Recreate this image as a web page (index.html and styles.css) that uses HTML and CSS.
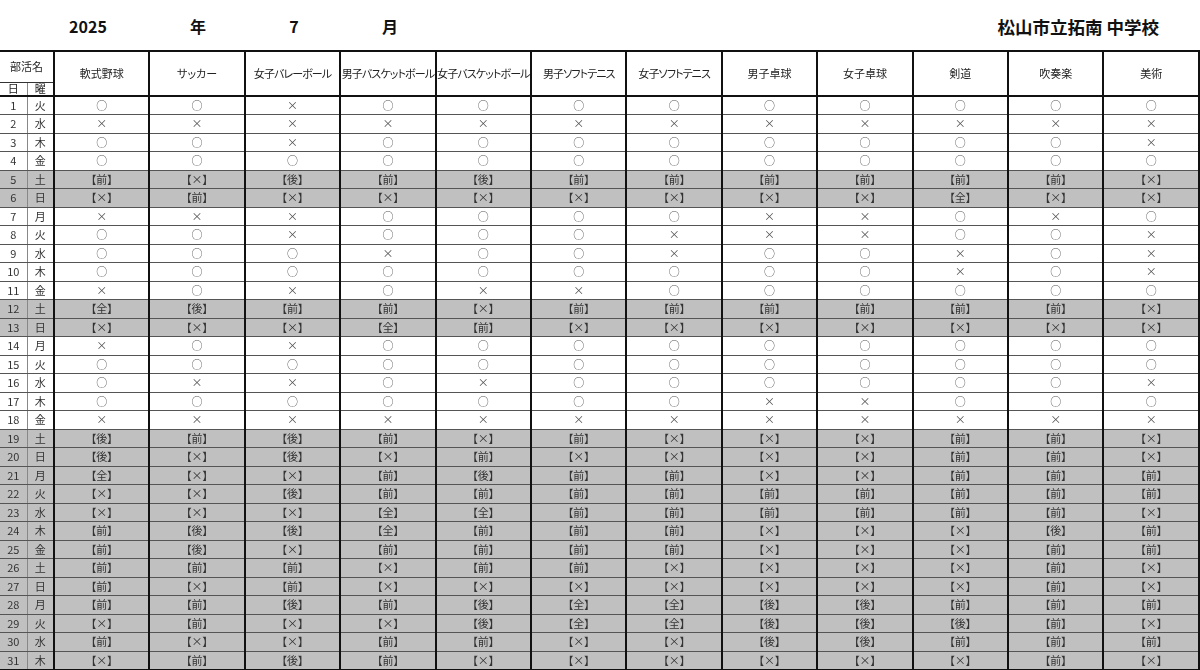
FILE: index.html
```html
<!DOCTYPE html>
<html lang="ja">
<head>
<meta charset="utf-8">
<title>部活動予定表</title>
<link rel="stylesheet" href="styles.css">
</head>
<body>
<div class="title">
  <span class="t-cell t-year">2025</span>
  <span class="t-cell t-nen">年</span>
  <span class="t-cell">7</span>
  <span class="t-cell">月</span>
  <span class="school">松山市立拓南 中学校</span>
</div>
<table class="sched">
  <colgroup>
    <col class="c-day"><col class="c-wd">
    <col><col><col><col><col><col><col><col><col><col><col><col>
  </colgroup>
  <thead>
    <tr class="h1">
      <th colspan="2" class="bukatsu">部活名</th>
      <th rowspan="2">軟式野球</th>
      <th rowspan="2">サッカー</th>
      <th rowspan="2" class="long">女子バレーボール</th>
      <th rowspan="2" class="long">男子バスケットボール</th>
      <th rowspan="2" class="long">女子バスケットボール</th>
      <th rowspan="2" class="long">男子ソフトテニス</th>
      <th rowspan="2" class="long">女子ソフトテニス</th>
      <th rowspan="2">男子卓球</th>
      <th rowspan="2">女子卓球</th>
      <th rowspan="2">剣道</th>
      <th rowspan="2">吹奏楽</th>
      <th rowspan="2" class="last">美術</th>
    </tr>
    <tr class="h2">
      <th class="day">日</th>
      <th class="wd">曜</th>
    </tr>
  </thead>
  <tbody>
    <tr><td class="day">1</td><td class="wd">火</td><td>○</td><td>○</td><td>×</td><td>○</td><td>○</td><td>○</td><td>○</td><td>○</td><td>○</td><td>○</td><td>○</td><td class="last">○</td></tr>
    <tr><td class="day">2</td><td class="wd">水</td><td>×</td><td>×</td><td>×</td><td>×</td><td>×</td><td>×</td><td>×</td><td>×</td><td>×</td><td>×</td><td>×</td><td class="last">×</td></tr>
    <tr><td class="day">3</td><td class="wd">木</td><td>○</td><td>○</td><td>×</td><td>○</td><td>○</td><td>○</td><td>○</td><td>○</td><td>○</td><td>○</td><td>○</td><td class="last">×</td></tr>
    <tr><td class="day">4</td><td class="wd">金</td><td>○</td><td>○</td><td>○</td><td>○</td><td>○</td><td>○</td><td>○</td><td>○</td><td>○</td><td>○</td><td>○</td><td class="last">○</td></tr>
    <tr class="we"><td class="day">5</td><td class="wd">土</td><td>【前】</td><td>【×】</td><td>【後】</td><td>【前】</td><td>【後】</td><td>【前】</td><td>【前】</td><td>【前】</td><td>【前】</td><td>【前】</td><td>【前】</td><td class="last">【×】</td></tr>
    <tr class="we"><td class="day">6</td><td class="wd">日</td><td>【×】</td><td>【前】</td><td>【×】</td><td>【×】</td><td>【×】</td><td>【×】</td><td>【×】</td><td>【×】</td><td>【×】</td><td>【全】</td><td>【×】</td><td class="last">【×】</td></tr>
    <tr><td class="day">7</td><td class="wd">月</td><td>×</td><td>×</td><td>×</td><td>○</td><td>○</td><td>○</td><td>○</td><td>×</td><td>×</td><td>○</td><td>×</td><td class="last">○</td></tr>
    <tr><td class="day">8</td><td class="wd">火</td><td>○</td><td>○</td><td>×</td><td>○</td><td>○</td><td>○</td><td>×</td><td>×</td><td>×</td><td>○</td><td>○</td><td class="last">×</td></tr>
    <tr><td class="day">9</td><td class="wd">水</td><td>○</td><td>○</td><td>○</td><td>×</td><td>○</td><td>○</td><td>×</td><td>○</td><td>○</td><td>×</td><td>○</td><td class="last">×</td></tr>
    <tr><td class="day">10</td><td class="wd">木</td><td>○</td><td>○</td><td>○</td><td>○</td><td>○</td><td>○</td><td>○</td><td>○</td><td>○</td><td>×</td><td>○</td><td class="last">×</td></tr>
    <tr><td class="day">11</td><td class="wd">金</td><td>×</td><td>○</td><td>×</td><td>○</td><td>×</td><td>×</td><td>○</td><td>○</td><td>○</td><td>○</td><td>○</td><td class="last">○</td></tr>
    <tr class="we"><td class="day">12</td><td class="wd">土</td><td>【全】</td><td>【後】</td><td>【前】</td><td>【前】</td><td>【×】</td><td>【前】</td><td>【前】</td><td>【前】</td><td>【前】</td><td>【前】</td><td>【前】</td><td class="last">【×】</td></tr>
    <tr class="we"><td class="day">13</td><td class="wd">日</td><td>【×】</td><td>【×】</td><td>【×】</td><td>【全】</td><td>【前】</td><td>【×】</td><td>【×】</td><td>【×】</td><td>【×】</td><td>【×】</td><td>【×】</td><td class="last">【×】</td></tr>
    <tr><td class="day">14</td><td class="wd">月</td><td>×</td><td>○</td><td>×</td><td>○</td><td>○</td><td>○</td><td>○</td><td>○</td><td>○</td><td>○</td><td>○</td><td class="last">○</td></tr>
    <tr><td class="day">15</td><td class="wd">火</td><td>○</td><td>○</td><td>○</td><td>○</td><td>○</td><td>○</td><td>○</td><td>○</td><td>○</td><td>○</td><td>○</td><td class="last">○</td></tr>
    <tr><td class="day">16</td><td class="wd">水</td><td>○</td><td>×</td><td>×</td><td>○</td><td>×</td><td>○</td><td>○</td><td>○</td><td>○</td><td>○</td><td>○</td><td class="last">×</td></tr>
    <tr><td class="day">17</td><td class="wd">木</td><td>○</td><td>○</td><td>○</td><td>○</td><td>○</td><td>○</td><td>○</td><td>×</td><td>×</td><td>○</td><td>○</td><td class="last">○</td></tr>
    <tr><td class="day">18</td><td class="wd">金</td><td>×</td><td>×</td><td>×</td><td>×</td><td>×</td><td>×</td><td>×</td><td>×</td><td>×</td><td>×</td><td>×</td><td class="last">×</td></tr>
    <tr class="we"><td class="day">19</td><td class="wd">土</td><td>【後】</td><td>【前】</td><td>【後】</td><td>【前】</td><td>【×】</td><td>【前】</td><td>【×】</td><td>【×】</td><td>【×】</td><td>【前】</td><td>【前】</td><td class="last">【×】</td></tr>
    <tr class="we"><td class="day">20</td><td class="wd">日</td><td>【後】</td><td>【×】</td><td>【後】</td><td>【×】</td><td>【前】</td><td>【×】</td><td>【×】</td><td>【×】</td><td>【×】</td><td>【前】</td><td>【前】</td><td class="last">【×】</td></tr>
    <tr class="we"><td class="day">21</td><td class="wd">月</td><td>【全】</td><td>【×】</td><td>【×】</td><td>【前】</td><td>【後】</td><td>【前】</td><td>【前】</td><td>【×】</td><td>【×】</td><td>【前】</td><td>【前】</td><td class="last">【前】</td></tr>
    <tr class="we"><td class="day">22</td><td class="wd">火</td><td>【×】</td><td>【×】</td><td>【後】</td><td>【前】</td><td>【前】</td><td>【前】</td><td>【前】</td><td>【前】</td><td>【前】</td><td>【前】</td><td>【前】</td><td class="last">【前】</td></tr>
    <tr class="we"><td class="day">23</td><td class="wd">水</td><td>【×】</td><td>【×】</td><td>【×】</td><td>【全】</td><td>【全】</td><td>【前】</td><td>【前】</td><td>【前】</td><td>【前】</td><td>【前】</td><td>【前】</td><td class="last">【×】</td></tr>
    <tr class="we"><td class="day">24</td><td class="wd">木</td><td>【前】</td><td>【後】</td><td>【後】</td><td>【全】</td><td>【前】</td><td>【前】</td><td>【前】</td><td>【×】</td><td>【×】</td><td>【×】</td><td>【後】</td><td class="last">【前】</td></tr>
    <tr class="we"><td class="day">25</td><td class="wd">金</td><td>【前】</td><td>【後】</td><td>【×】</td><td>【前】</td><td>【前】</td><td>【前】</td><td>【前】</td><td>【×】</td><td>【×】</td><td>【×】</td><td>【前】</td><td class="last">【前】</td></tr>
    <tr class="we"><td class="day">26</td><td class="wd">土</td><td>【前】</td><td>【前】</td><td>【前】</td><td>【×】</td><td>【前】</td><td>【前】</td><td>【×】</td><td>【×】</td><td>【×】</td><td>【×】</td><td>【前】</td><td class="last">【×】</td></tr>
    <tr class="we"><td class="day">27</td><td class="wd">日</td><td>【前】</td><td>【×】</td><td>【前】</td><td>【×】</td><td>【×】</td><td>【×】</td><td>【×】</td><td>【×】</td><td>【×】</td><td>【×】</td><td>【前】</td><td class="last">【×】</td></tr>
    <tr class="we"><td class="day">28</td><td class="wd">月</td><td>【前】</td><td>【前】</td><td>【後】</td><td>【前】</td><td>【後】</td><td>【全】</td><td>【全】</td><td>【後】</td><td>【後】</td><td>【前】</td><td>【前】</td><td class="last">【前】</td></tr>
    <tr class="we"><td class="day">29</td><td class="wd">火</td><td>【×】</td><td>【前】</td><td>【×】</td><td>【×】</td><td>【後】</td><td>【全】</td><td>【全】</td><td>【後】</td><td>【後】</td><td>【後】</td><td>【前】</td><td class="last">【×】</td></tr>
    <tr class="we"><td class="day">30</td><td class="wd">水</td><td>【前】</td><td>【×】</td><td>【×】</td><td>【前】</td><td>【前】</td><td>【×】</td><td>【×】</td><td>【後】</td><td>【後】</td><td>【前】</td><td>【前】</td><td class="last">【前】</td></tr>
    <tr class="we"><td class="day">31</td><td class="wd">木</td><td>【×】</td><td>【前】</td><td>【後】</td><td>【前】</td><td>【×】</td><td>【×】</td><td>【×】</td><td>【×】</td><td>【×】</td><td>【×】</td><td>【前】</td><td class="last">【×】</td></tr>
  </tbody>
</table>
</body>
</html>
```

FILE: styles.css
```css
html, body {
  margin: 0;
  padding: 0;
  background: #ffffff;
}

body {
  font-family: "Noto Sans CJK JP", "Noto Sans", sans-serif;
  color: #222222;
  font-feature-settings: "palt";
}

.title {
  display: flex;
  align-items: center;
  height: 50px;
  padding-top: 2px;
  box-sizing: border-box;
}

.t-cell {
  width: 96px;
  text-align: center;
  font-size: 16px;
  font-weight: bold;
  color: #111111;
}

.t-year {
  margin-left: 40px;
}

.t-nen {
  margin-left: 14px;
}

.school {
  margin-left: auto;
  margin-right: 41px;
  font-size: 17.5px;
  font-weight: bold;
  color: #111111;
  font-feature-settings: normal;
}

.sched {
  border-collapse: collapse;
  table-layout: fixed;
  width: 1200px;
  font-size: 11px;
  will-change: transform;
}

.c-day,
.c-wd {
  width: 27px;
}

.sched th,
.sched td {
  padding: 0;
  text-align: center;
  vertical-align: middle;
  white-space: nowrap;
  line-height: 1;
  border-left: 2px solid #111111;
  border-bottom: 1px solid #555555;
}

.sched td {
  overflow: hidden;
}

.sched th {
  font-weight: normal;
  color: #222222;
  border-top: 2px solid #111111;
  border-bottom: 2px solid #111111;
}

.sched th.long {
  letter-spacing: -0.9px;
}

.sched .h1 {
  height: 31px;
}

.sched .h2 {
  height: 14px;
}

.sched .h1 th.bukatsu {
  border-bottom: 1px solid #333333;
  border-left: none;
}

.sched .h2 th {
  border-top: 1px solid #333333;
}

.sched .day {
  border-left: none;
}

.sched .wd {
  border-left: 1px solid #888888;
}

.sched .last {
  border-right: 2px solid #111111;
}

.sched td {
  color: #555555;
}

.sched td.day,
.sched td.wd {
  color: #333333;
}

.sched tbody tr {
  height: 18.5px;
}

.sched tbody tr.we td {
  background: #c0c0c0;
  color: #333333;
}

.sched tbody tr:last-child td {
  border-bottom: 2px solid #111111;
}
```
